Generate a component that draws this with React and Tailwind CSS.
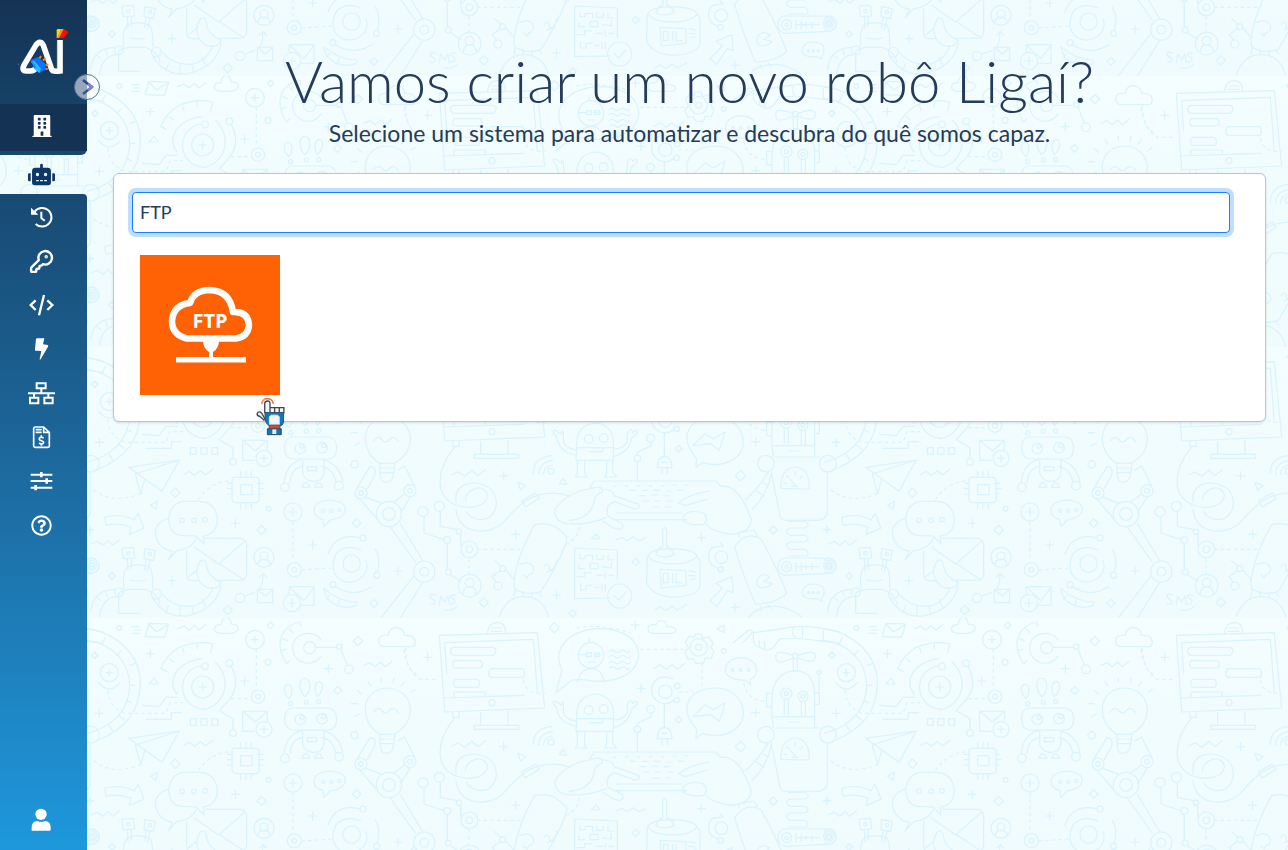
import { FaBuilding, FaRobot, FaRegQuestionCircle } from "react-icons/fa";
import { KeyRound } from "lucide-react";

const plus = (x, y, r = 12) => `M${x - r} ${y}h${2 * r}M${x} ${y - r}v${2 * r}`;
const gem = (x, y, r = 12) => `M${x} ${y - r}l${r} ${r}l${-r} ${r}l${-r} ${-r}z`;
const ring = (x, y, r) => `M${x - r} ${y}a${r} ${r} 0 1 0 ${2 * r} 0a${r} ${r} 0 1 0 ${-2 * r} 0`;
const zig = (x, y) => `M${x} ${y}l18 -8l16 12l16 -14l14 14l20 -16`;

/* Doodle artwork, one list of strokes for each region of the repeating tile */
const upperLeft = [
  "M0 50C90 60 165 130 163 215C160 300 120 350 30 388", "M0 84C80 96 132 150 131 225C128 290 85 345 0 365",
  "M58 76l-8 16M106 116l-14 14M133 160l16 -6M131 220h16M122 265l14 8M100 312l16 12M70 340l10 16",
  ring(70, 182, 27), plus(70, 182, 10), "M38 212Q70 250 102 212", gem(27, 130, 10), ring(100, 48, 7),
  "M138 44h22M144 54h20M138 64h22", "M188 34l60 2l-12 40l-58 -2zM188 36l24 24l34 -22", zig(275, 50),
  "M385 52q0 -14 20 -14q4 -22 16 -22q16 4 14 20q22 0 22 14q-6 16 -36 14q-34 2 -36 -12z",
  plus(193, 125), plus(476, 207), plus(40, 304), plus(727, 170), "M190 216l14 -18l12 18z",
  "M224 170Q240 130 280 106Q330 84 380 96L374 122M224 170l18 8M250 140l12 10M290 108l4 14M334 96v14",
  ring(350, 225, 33), plus(350, 225, 12), "M360 292C290 292 270 215 310 178Q330 162 346 162M388 150C440 200 420 280 350 294M348 140C270 150 240 210 274 246",
  ring(357, 163, 10), ring(430, 154, 10), "M436 164Q465 220 430 262L400 296L441 320V352", ring(441, 363, 10),
  "M170 280l50 4l20 -28h34M180 322h76v-20h30", "M313 320h18v20h-18zM345 320h18v20h-18zM377 320h18v20h-18z",
  ring(507, 83, 28), plus(507, 83, 11), ring(516, 254, 20), ring(516, 254, 7), gem(554, 40, 10), ring(546, 151, 9),
  "M642 30C590 40 560 90 602 156L612 146M642 30l2 12M610 50l10 12M590 80l14 6M586 116l14 -4", ring(671, 107, 18),
  "M705 82C680 50 622 62 620 106C620 156 680 170 706 132", "M690 106h62M766 114l18 46", ring(760, 104, 8), ring(789, 172, 13),
  gem(816, 87, 14), "M878 86q0 -18 28 -16q6 -24 26 -24q22 4 24 24q32 -2 32 22q0 12 -16 12h-78q-16 -2 -16 -18z",
  zig(834, 160), "M606 216c-20 6 -8 36 4 44c10 -14 12 -38 -4 -44zM657 198c-26 6 -14 44 0 56c14 -12 24 -46 0 -56zM700 208c-20 6 -12 38 -6 46c14 -10 24 -40 6 -46z",
  ring(614, 275, 6), ring(661, 270, 6), ring(698, 269, 6), "M618 288h110q24 4 24 34t-24 32h-110q-22 -4 -22 -34t22 -32z",
  ring(643, 322, 16), ring(708, 320, 16), ring(648, 316, 6), ring(713, 314, 6),
  gem(755, 235), "M470 298h74v30M470 298v60h34M470 298l38 32l36 -32", ring(534, 352, 24), plus(534, 352, 10),
  "M880 366C820 330 822 234 900 228C985 228 1000 330 924 366M862 300q14 -20 26 -4q10 14 22 0q14 -16 28 6",
  "M846 208l8 14M886 198v12M924 198l-2 14M954 210l-8 12M814 236l12 10M796 275h18M806 314l14 -8M976 240l12 -8", ring(806, 370, 11),
];

const lowerLeft = [
  "M128 112L280 90L228 184zM280 90L148 132L164 192L176 148", "M293 134l16 -10l16 12l18 -14l16 12l22 -16", gem(268, 188, 14), "M194 226l20 -12l-4 24z",
  "M442 142h70q8 4 8 12v54q-2 10 -12 10h-60q-10 -4 -10 -14v-56zM464 164h34v30h-34zM464 142v-18M480 142v-18M496 142v-18M464 218v18M480 218v18M496 218v18M440 160h-16M440 176h-16M440 192h-16M514 160h16M518 176h16M516 192h14",
  "M290 214Q252 222 248 268Q252 312 284 316L330 318L354 342L352 318Q394 312 394 266Q388 216 340 214z", ring(288, 271, 7), ring(324, 271, 7), ring(357, 269, 7),
  "M248 264Q200 280 210 320Q220 358 260 364L246 390L272 362Q318 356 330 326",
  "M358 325h106q16 2 18 18v90q-4 18 -20 18h-72M302 362v72q0 18 18 18h18M326 352l72 50l80 -70M402 402l72 48", "M344 392q16 -8 18 16q2 30 44 50q-10 20 -40 16q-30 -10 -34 -48q0 -14 12 -34zM308 440l26 -20",
  "M56 262q50 -14 88 8l12 -20l18 44l-44 20l4 -22q-34 -16 -74 -6z", zig(16, 342),
  "M108 354l34 -2l4 32l-34 2zM176 356l32 6l-6 30l-28 -6zM124 388l2 34M136 388v28M180 390l-4 30M192 392l-8 32", ring(127, 370, 5), ring(192, 372, 5),
  "M114 474q-6 -40 8 -62q30 -16 70 0q10 20 8 62M98 550v-60q14 -16 80 -12q40 16 44 44M98 550h62M132 450q24 6 46 0",
  ring(99, 487, 13), ring(211, 492, 15), "M86 478Q20 480 14 545M94 500Q50 500 40 560M200 506Q240 564 300 558Q390 540 406 466M226 490Q270 540 330 526Q366 510 380 476M240 548l8 -22M282 558v-28M322 550l-4 -22M358 530l-10 -22M30 500l14 12M58 484l6 16",
  ring(17, 407, 22), ring(17, 407, 9), gem(78, 438, 10), plus(258, 452), plus(448, 280), gem(527, 300, 14), plus(680, 345), plus(936, 423), plus(12, 298, 9), gem(425, 540, 14),
  ring(548, 236, 7), ring(621, 246, 27), plus(621, 246, 12), ring(625, 419, 21), ring(625, 419, 7),
  "M684 240Q686 214 730 210Q778 214 778 238Q776 264 732 270L714 290L710 268Q684 262 684 240z", ring(712, 242, 5), ring(736, 242, 5), ring(760, 240, 5),
  gem(812, 279, 13), ring(534, 382, 30), ring(534, 378, 12), "M516 404q0 -16 18 -16t18 16", ring(462, 504, 14), "M476 498l30 -10M518 480q14 -14 12 -46M520 442l12 -12l10 12M514 478h46v40h-46zM514 478l24 20l22 -20",
  ring(618, 519, 26), plus(618, 519, 11), "M610 492v-22h74v56h-40M612 472l42 40l30 -40",
  ring(797, 401, 26), "M824 360Q780 340 750 372Q730 412 754 442Q790 472 830 440Q850 416 840 392M726 372Q750 306 824 324M868 358Q886 386 874 426M746 468Q800 506 856 470", ring(831, 324, 9), ring(872, 436, 9), ring(741, 464, 9),
  "M714 476Q720 526 780 532Q820 530 812 516Q760 516 714 476M730 496l-8 12M760 510l-4 14", gem(864, 520, 12),
  "M594 160Q600 100 648 88M612 156Q618 114 648 110M708 88Q760 100 770 154M706 110Q740 114 750 156M650 92v38q8 24 34 24t30 -26v-36M664 110h28v12h-28z", ring(597, 172, 13), ring(759, 167, 13), "M648 172q10 -28 24 0zM686 172q10 -28 24 0z",
  "M880 100h46v14l-6 30q-8 16 -28 12q-12 -8 -10 -56M882 114h44M882 128h40", ring(825, 189, 18), ring(825, 189, 7), ring(972, 182, 18), ring(972, 182, 7), ring(909, 252, 38), ring(909, 252, 19),
  "M814 172l38 -62q20 0 14 26l-22 40M936 120l20 -12l30 60M840 202l48 18M820 206l56 64M956 192l-30 22M972 202l-28 46M912 290l76 106M944 282l66 110", ring(1015, 425, 32), ring(1015, 425, 13), "M1010 458L944 563M982 440L886 563",
];

const upperRight = [
  "M118 46L412 38L434 264L134 276zM134 68L400 58L412 220M134 68l6 90M128 234L372 226M242 278v38h82v-42M222 316h134v12h-134z", ring(276, 248, 9),
  "M160 82h120q10 4 8 12t-8 12h-120q-8 -4 -8 -12t8 -12zM162 122h80q10 12 0 22h-80q-8 -10 0 -22zM272 146h96q10 12 2 26h-98q-12 -10 0 -26zM166 178h66q12 10 2 24h-68q-12 -12 0 -24zM162 230v-14h94v14M262 42q4 -34 30 -34t24 30M276 24h30M274 34h32",
  gem(463, 23, 15), plus(706, 15), "M744 26q0 -14 24 -12q8 -20 28 -8q6 8 4 14q26 -2 28 12q-4 8 -18 8h-52q-14 -2 -14 -14zM972 16v22l-22 -12z",
  "M600 25C690 30 716 70 716 106C710 170 630 196 546 178L516 180L468 218L486 150C456 90 500 30 600 25z", ring(573, 106, 38), "M536 104h26M582 104h20M560 98h14v12h-14zM584 98h14v12h-14zM568 56v12M566 126h20M532 186q10 -40 42 -40t38 40",
  "M628 94q8 -8 16 0t16 0t16 0t14 0M628 110q8 -8 16 0t16 0t16 0t14 0M628 128q8 -8 16 0t16 0t16 0t14 0M630 144q8 -8 16 0t16 0t16 0t10 0",
  "M884 42h20l4 14l18 -6l14 20l-8 12l10 12l-8 22l-18 -2l-6 16h-22l-8 -14l-16 2l-10 -22l12 -12l-10 -18l12 -18l16 4z", ring(896, 82, 26), ring(896, 82, 9), ring(971, 93, 7), plus(83, 112), plus(723, 205), plus(1067, 278),
  "M760 146l20 -12l18 14l18 -14l16 14l22 -18", "M976 152q2 -36 46 -39q48 4 48 40q-4 20 -20 26l2 14l-18 -12q-54 -2 -58 -29z", ring(998, 150, 4), ring(1022, 150, 4), ring(1046, 150, 4),
  "M818 176C770 160 750 190 756 222C770 258 806 256 822 240", ring(796, 215, 20), ring(832, 198, 8), ring(830, 240, 8), "M793 252v68M772 356q0 -32 22 -34q22 2 22 34zM786 356v18M802 356v18M784 340h16M712 320v-10l42 -20v-12M712 336v60", ring(752, 268, 12), ring(712, 328, 10),
  "M946 204C1000 204 1030 240 1030 282C1028 330 970 360 908 340L888 356L890 328C830 260 870 206 946 204zM878 290l38 -36l24 16l36 -22l-18 56l-26 -20z",
  "M530 296q-4 -70 60 -74q56 8 50 74v38h-112zM530 296h112M568 296h40v12h-40M532 336v38l-6 10h34l-6 -12v-36M620 336v36l-6 12h36l-12 -14v-34M526 318q-50 -10 -56 -54q-20 -24 -2 -20l16 12q2 -18 6 -4q0 20 2 32q10 16 34 18M644 322q44 -14 50 -54q28 -20 14 -24l-10 6q-4 -18 -16 2v26q-10 20 -38 22", ring(566, 270, 13), ring(611, 267, 13),
  gem(836, 299, 10), gem(1022, 380, 16), "M400 374q0 -50 56 -54M416 376q0 -36 42 -42M430 376q2 -24 26 -28", ring(453, 366, 9), "M156 378l18 -10l20 14l22 -18l18 16l22 -18", plus(311, 380), "M354 400l24 10l-16 14zM478 404l12 -16l10 18z",
  "M158 278v14h20v-14M164 294C110 360 100 440 168 468C215 484 264 470 262 436C250 400 196 420 196 454M168 482C176 560 270 560 310 520Q370 450 410 440Q460 424 510 442M168 460C160 400 220 396 250 408C300 424 300 490 262 508C230 520 206 500 200 488M364 456l42 -24l12 16l-42 26z",
  "M570 416l12 -20h366l14 16M650 492h196M640 512h220M568 420Q500 430 466 480Q460 516 500 524Q560 530 618 506M568 420q40 -14 40 8q-20 10 -24 20q-6 60 -76 66M612 420q30 4 30 20l74 26q6 16 -18 12l-54 -20q-30 10 -20 44l44 22q6 26 -30 12l-30 -20M962 412q54 -10 92 100q-2 40 -62 44q-60 -10 -72 -30M926 426q-60 10 -90 36l20 8l66 -20M850 500q20 -20 60 -8q20 20 0 34q-36 6 -60 -10z",
  "M640 412h8M676 410h8M712 410h8M748 410h8M784 410h8M820 408h8M856 408h8M690 424h16M726 424h16M762 424h16M798 426h16M834 424h16M720 440h16M756 438h16M792 440h16M730 456h16M766 456h16M802 456h16M760 474h16M796 474h16",
  ring(69, 488, 15), ring(118, 472, 15), ring(142, 573, 10), ring(177, 548, 8), "M72 504v48l60 20M121 488v44l50 10M182 558v32M142 584v74",
  "M1000 68l44 -36q20 -6 8 12l-24 24M1060 38q60 -6 122 -18q60 -4 138 16M1182 20q-8 20 2 34q60 6 136 16M1060 38q-4 40 20 44q24 16 40 0l20 -26h40M1078 80v-18M1094 84v-20M1208 22v34M1270 30v34", ring(1186, 108, 8),
  "M1178 106q-54 -20 -50 4q-4 30 50 4M1194 106q54 -20 52 4q0 24 -52 4M1180 118v36M1192 118v36M1120 322q-10 -60 0 -120q20 -50 70 -50q56 6 54 80v92M1122 290h120M1166 306h30M1244 218h14v36h-14M1114 220h-14v40h14M1257 164v54", ring(1159, 221, 17), ring(1209, 229, 15), ring(1159, 221, 6), ring(1209, 229, 6), ring(1257, 157, 6), "M1153 240v44M1165 240v44M1204 246v42M1216 246v42",
  ring(1098, 344, 25), ring(1284, 344, 25), "M1126 324h134M1114 370l26 130q4 14 16 14h100q24 -4 26 -24v-120M1142 418q0 -60 44 -64q44 4 42 66zM1186 408l-14 -16M1176 412h18M1152 402l8 2M1160 380l8 6M1186 368v10M1208 380l-8 8M1104 370Q1074 420 1036 452M1114 376Q1100 440 1056 482M1090 402l16 8M1070 426l22 16",
  gem(1295, 106, 9),
];

const lowerRight = [
  ring(208, 358, 25), ring(208, 358, 10), "M182 314v30M142 340v76M152 434l30 20", ring(145, 426, 9), ring(209, 467, 34), ring(209, 458, 13), "M190 494q0 -24 19 -24t20 24",
  "M106 496q-14 -8 -16 2q2 8 14 14q4 14 -14 10M118 524l4 -26l12 18l10 -18l4 26M166 496q-16 -4 -14 6q16 8 12 16q-2 6 -14 4M132 540q24 4 38 -10", gem(251, 517, 14),
  plus(347, 313), plus(470, 495), plus(904, 323), plus(1005, 532), plus(1280, 300), gem(707, 396, 11), gem(518, 550, 11), gem(1120, 300, 12),
  ring(308, 416, 9), ring(294, 468, 12), "M284 392l20 18M300 422l-24 18l14 18M316 418l26 30",
  "M342 456Q350 380 404 284Q460 270 500 320Q504 350 424 484Q380 500 344 476zM346 480l-4 18M416 486l8 12M370 484v14M396 488v12M298 560Q320 500 370 500Q430 500 446 562M358 404q30 -14 42 8q4 20 -14 22l-4 10l-10 -8M432 410q10 -16 16 0q-2 20 16 8M442 426q26 -12 30 -36",
  "M574 326l14 -14l12 14zM648 330l18 -8l16 10l18 -12l16 12l20 -8", "M524 354l128 6v88M524 354v152l106 -2M540 374v12h16v-10h22v14M590 374v14h20v-12M624 376v14h16M536 404v12h18M570 400h24v16h-24zM608 410l26 4v-16M532 440h22v-12h20M590 436h18M616 428v16M626 436h16M542 462v18h16v-14h18M586 472h10M606 462v20M616 462v20", ring(659, 498, 36), "M642 496l14 14l22 -24",
  "M742 380Q750 356 820 356Q890 360 890 380Q870 402 820 402Q750 400 746 376M742 382L740 460Q760 500 822 502Q890 498 900 470V390L890 376M780 418l78 4v44l-74 8zM790 430h14v28h-14zM818 430v28M828 430v28h18M868 422l20 4M866 436l22 2M870 450l18 -4M788 300q6 -14 12 0v50q20 10 22 24q-28 14 -54 0q4 -16 20 -24zM764 540l18 -10l16 12l18 -14l16 12l28 -16",
  "M952 350Q924 350 926 386Q930 408 954 414M952 350l18 -2l-10 -10M952 350l-10 0", ring(964, 382, 19), ring(962, 418, 8), "M930 512l38 -38l-20 -14l48 -20l4 48l-18 -6l-32 48z",
  "M1004 350Q1040 300 1084 328Q1130 410 1160 490Q1130 520 1066 522Q1030 440 1004 350M1016 322l2 -14l44 -8l10 18M1080 528l6 14M1104 524l10 12M1046 562Q1080 520 1150 532Q1200 550 1204 562M1092 454L1110 442Q1090 424 1074 444Q1062 470 1088 474Q1110 470 1116 460z",
  "M1166 274h50q18 10 0 20h-46q-20 10 0 22h44q20 10 0 20h-44q-20 10 0 22h44q16 8 6 20h-52M1150 384h140q18 8 18 24t-18 22l-136 6q-20 -8 -20 -26t16 -26M1188 398v26M1204 400v22M1188 410h70M1218 404v14M1236 402v18", ring(1160, 410, 15), ring(1286, 406, 15), ring(1160, 410, 5), ring(1286, 406, 5),
  "M1206 488q4 -26 34 -26q34 2 32 24q0 14 -8 18l2 10l-16 -8q-42 4 -44 -18z", ring(1226, 488, 3), ring(1240, 488, 3), ring(1254, 488, 3),
];

const dashes = [
  ["translate(-1 -6) scale(.3333)", "M66 236Q70 290 120 304H240L252 272H290M436 260H496M511 112V230M958 108Q960 170 990 186"],
  ["translate(-1 83) scale(.3333)", "M24 180Q80 224 160 192M338 208Q370 158 432 152M621 276V396M648 420L740 414"],
  ["translate(313 2) scale(.3333)", "M530 24Q600 10 690 38M722 88H850M906 130V202M836 216H880M1032 190Q1040 240 1096 244M370 182Q380 224 434 220M12 90Q20 150 60 178H116"],
  ["translate(313 83) scale(.3333)", "M232 358H366M207 386V430M538 292Q530 330 500 342"],
];

function Doodles() {
  return (
    <svg aria-hidden="true" className="pointer-events-none absolute inset-0 h-full w-full">
      <defs>
        <linearGradient id="tileShade" x1="0" y1="0" x2="0" y2="1">
          <stop offset="0" stopColor="#f4fdff" />
          <stop offset=".35" stopColor="#f1fcff" />
          <stop offset="1" stopColor="#f0fbfe" />
        </linearGradient>
        <g id="tileArt" fill="none" stroke="#dbf3fc" strokeWidth="3.6" strokeLinecap="round" strokeLinejoin="round">
          <path transform="translate(-1 -6) scale(.3333)" d={upperLeft.join("")} />
          <path transform="translate(-1 83) scale(.3333)" d={lowerLeft.join("")} />
          <path transform="translate(313 2) scale(.3333)" d={upperRight.join("")} />
          <path transform="translate(313 83) scale(.3333)" d={lowerRight.join("")} />
          {dashes.map(([place, d]) => (
            <path key={place} transform={place} d={d} strokeDasharray="8 12" />
          ))}
        </g>
        <pattern id="tile" x="87" y="76" width="737" height="271" patternUnits="userSpaceOnUse">
          <rect width="737" height="271" fill="url(#tileShade)" />
          <use href="#tileArt" />
          <use href="#tileArt" x="-737" />
        </pattern>
      </defs>
      <rect width="100%" height="100%" fill="url(#tile)" />
    </svg>
  );
}

function Glyph({ box, width = 6, children }) {
  return (
    <svg viewBox={box} className="h-6 w-7" fill="none" stroke="currentColor" strokeWidth={width} aria-hidden="true">
      {children}
    </svg>
  );
}

function Logo() {
  return (
    <svg viewBox="46 78 168 156" className="h-[52px] w-14" fill="none" aria-hidden="true">
      <path d="M153 208L128 136Q118 118 105 137L71 194Q61 213 77 213H90Q101 213 108 202" stroke="#fff" strokeWidth="17" strokeLinecap="round" />
      <path d="M152 211Q164 215 178 213V120" stroke="#fff" strokeWidth="17" />
      <path d="M170 125v82" stroke="#bccad8" strokeWidth="2" />
      <path d="M168 91q0-4 5-4h8l-7 27h-6z" fill="#ffd21a" />
      <path d="M181 87h9l-12 27h-9z" fill="#ff9d00" />
      <path d="M189 87l15 9l-14 18h-15z" fill="#f50f00" />
      <path d="M116 176l5-8M127 181l8-6M135 196l8-3M134 206l7 1" stroke="#ff8119" strokeWidth="6" />
      <path d="M91 180L112 171L136 193L132 211L116 219L99 204z" fill="#0873ff" />
      <path d="M93 180L102 184L121 206L116 219L99 205L106 201z" fill="#31b9ff" />
      <path d="M91 184L108 203" stroke="#1ca0f4" strokeWidth="4" />
      <path d="M53 191v5" stroke="#6c87a1" strokeWidth="2" />
    </svg>
  );
}

const menu = [
  {
    label: "Histórico",
    icon: (
      <Glyph box="81 48 84 72">
        <path d="M104 68A28 28 0 1 1 107 105" />
        <path d="M93 56V77H115z" fill="currentColor" stroke="none" />
        <path d="M124 68V87L134 95" />
      </Glyph>
    ),
  },
  { label: "Credenciais", icon: <KeyRound size={25} strokeWidth={2.3} /> },
  {
    label: "Código",
    icon: (
      <Glyph box="81 309 84 72" width={7}>
        <path d="M107 331L92 345L107 360M142 331L157 345L142 360M132 315L117 376" />
      </Glyph>
    ),
  },
  {
    label: "Gatilhos",
    icon: (
      <Glyph box="81 441 84 72">
        <path d="M110 445H133L129 463L143 465Q146 466 144 470L122 508Q119 511 119 507L124 483L107 482Q104 482 105 478L108 447z" fill="currentColor" stroke="none" />
      </Glyph>
    ),
  },
  {
    label: "Rede",
    icon: (
      <Glyph box="81 33 84 72">
        <path d="M110 40H137V55H110zM90 83H115V100H90zM133 83H158V100H133zM124 55V70M84 70H165M102 70V83M145 70V83" />
      </Glyph>
    ),
  },
  {
    label: "Faturas",
    icon: (
      <Glyph box="81 165 84 72" width={5}>
        <path d="M106 171H131L148 187V228Q148 232 144 232H106Q101 232 101 228V176Q101 171 106 171zM131 171V187H148M107 179H125M107 187H125" />
        <path d="M131 204Q122 199 118 205Q116 210 124 212Q133 215 130 220Q126 225 117 219M124 196V202M124 221V227" />
      </Glyph>
    ),
  },
  {
    label: "Ajustes",
    icon: (
      <Glyph box="81 297 84 72">
        <path d="M92 314H157M92 333H157M92 353H157" />
        <path d="M124 306V322M140 325V341M107 345V361" strokeWidth="8" />
      </Glyph>
    ),
  },
  { label: "Ajuda", icon: <FaRegQuestionCircle size={21} /> },
];

function Sidebar() {
  return (
    <aside className="relative flex w-[87px] shrink-0 flex-col text-white">
      <div className="rounded-br-md bg-linear-to-b from-[#143354] to-[#17486f] pb-1">
        <a href="#inicio" aria-label="Ligaí" className="flex h-[104px] justify-center pt-[26px]">
          <Logo />
        </a>
        <a href="#empresa" aria-label="Empresa" className="flex h-[47px] items-center justify-center bg-[#143254] pr-1 pb-1">
          <FaBuilding size={22} />
        </a>
      </div>
      <a href="#robos" aria-label="Robôs" className="flex h-[39px] items-center justify-center pr-1 text-[#0c3766]">
        <FaRobot size={27} />
      </a>
      <div className="flex flex-1 flex-col rounded-tr-sm bg-linear-to-b from-[#184a73] to-[#1e98dd] pt-px">
        <nav className="flex flex-col">
          {menu.map((item) => (
            <a key={item.label} href="#menu" aria-label={item.label} className="flex h-11 items-center justify-center pr-[5px]">
              {item.icon}
            </a>
          ))}
        </nav>
        <a href="#conta" aria-label="Conta" className="mt-auto flex h-[60px] items-center justify-center pr-[5px]">
          <Glyph box="82 84 84 72">
            <path d="M96 152V143Q96 124 113 123Q124 129 136 123Q153 124 153 143V149Q153 152 150 152z" fill="currentColor" stroke="none" />
            <circle cx="124" cy="103" r="17" fill="currentColor" stroke="none" />
          </Glyph>
        </a>
      </div>
      <button
        type="button"
        aria-label="Expandir menu"
        className="absolute top-[74px] -right-[13px] z-10 flex size-[26px] items-center justify-center rounded-full border border-[#557493] bg-white/55"
      >
        <svg viewBox="0 0 26 26" className="size-[26px] shrink-0" fill="none" strokeWidth="2.6" aria-hidden="true">
          <path d="M9 6L18 13" stroke="#31459d" />
          <path d="M18 13L9 20" stroke="#3d50a8" />
          <path d="M14 10L18 13L14 16" stroke="#8580d8" />
        </svg>
      </button>
    </aside>
  );
}

function FtpLogo() {
  return (
    <svg viewBox="0 0 140 140" className="size-[140px]" aria-hidden="true">
      <rect width="140" height="140" fill="#ff6204" />
      <path d="M47 83.500Q32 80 32 66Q33 50 50 48Q54 35 70 35Q90 36 93 57Q108 56 109 70Q108 82 96 83.500z" fill="none" stroke="#fff" strokeWidth="6.500" strokeLinejoin="round" />
      <path d="M63 86H79Q79 93 73 97V103H69V97Q63 93 63 86z" fill="#fff" />
      <path d="M36 102h70v5.500H36z" fill="#fff" />
      <text x="70" y="73" textAnchor="middle" fill="#fff" className="font-[Open_Sans,sans-serif] text-[20px] font-bold">
        FTP
      </text>
    </svg>
  );
}

function RobotHand() {
  return (
    <svg viewBox="440 698 90 118" className="pointer-events-none absolute -right-1.5 -bottom-[41px] h-[39px] w-[30px]" fill="none" aria-hidden="true">
      <path d="M457 719Q459 703 475 703Q490 704 492 719" stroke="#ed5b32" strokeWidth="4" />
      <path d="M457 719Q459 707 468 704" stroke="#ff9b48" strokeWidth="4" />
      <path d="M466 747V717Q467 710 475 710Q482 711 482 717V745M482 730h42v16h-42zM496 730v14M510 730v14" fill="#f3f5f7" stroke="#3a4650" strokeWidth="4" />
      <path d="M468 767L457 747Q448 739 443 748Q442 755 452 757L465 769" fill="#eef2f5" stroke="#3a4650" strokeWidth="4" />
      <path d="M467 745h56v29q-1 10-13 13h-28q-12-7-15-20z" fill="#1478b8" stroke="#315168" strokeWidth="3" />
      <path d="M480 758l5-5h20l5 5v24h-30z" fill="#f1f3f5" stroke="#d5e4ee" strokeWidth="3" />
      <path d="M479 783h33v10h-33z" fill="#e8431f" stroke="#31536b" strokeWidth="2" />
      <path d="M474 794h42v18h-42z" fill="#0d78ba" stroke="#3a4650" strokeWidth="3" />
      <path d="M489 796h12v14h-12z" fill="#e5edf2" />
    </svg>
  );
}

export default function App() {
  return (
    <div className="relative flex min-h-screen bg-[#f0fbfe] font-[Lato,sans-serif] text-[#243b5a]">
      <Doodles />
      <Sidebar />
      <main className="relative min-w-0 flex-1 pt-[45px] pr-[22px] pl-[26px]">
        <header className="text-center">
          <h1 className="text-[58px] leading-[72px] font-light">Vamos criar um novo robô Ligaí?</h1>
          <p className="text-[23px] leading-[32px]">Selecione um sistema para automatizar e descubra do quê somos capaz.</p>
        </header>
        <section className="mt-6 rounded-md border border-[#abc9ed] bg-white pt-[18px] pr-[35px] pb-[26px] pl-[18px] shadow-sm">
          <input
            type="text"
            aria-label="Buscar sistema"
            defaultValue="FTP"
            className="block h-[41px] w-full rounded border border-[#1a80ff] bg-white px-[7px] pb-0.5 text-[18px] text-[#243b5a] ring-4 ring-[#bfddff] outline-none"
          />
          <button type="button" aria-label="FTP" className="relative mt-[22px] ml-2 block">
            <FtpLogo />
            <RobotHand />
          </button>
        </section>
      </main>
    </div>
  );
}
